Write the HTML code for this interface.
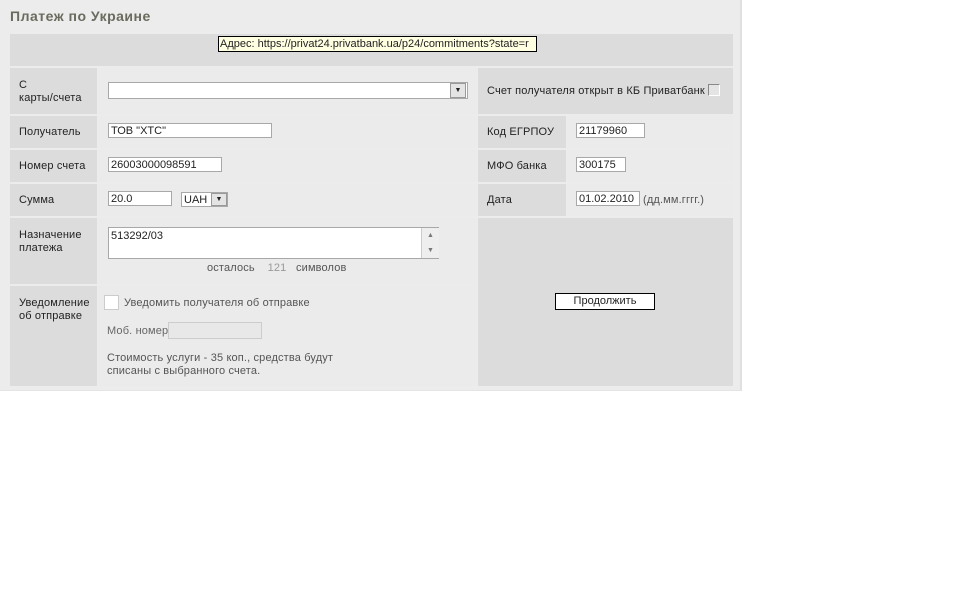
<!DOCTYPE html>
<html><head><meta charset="utf-8"><style>
body{margin:0;width:962px;height:615px;background:#fff;font-family:"Liberation Sans","DejaVu Sans",sans-serif;font-size:11px;color:#222;position:relative;overflow:hidden}
.a{position:absolute}
.wrap{left:0;top:0;width:740px;height:390px;background:#ececec;border-right:2px solid #e0e0e0;border-bottom:1px solid #e4e4e4}
.d{background:#dcdcdc}.l{background:#ebebeb}
.inp{position:absolute;background:#fff;border:1px solid #a8a8a8;height:15px;box-sizing:border-box;font-size:11px;padding:1px 2px;line-height:12px}
.t{position:absolute;white-space:nowrap;line-height:13px;letter-spacing:0.15px}
</style></head><body>
<div class="a wrap"></div>
<div class="t" style="left:10px;top:8px;font-size:14px;font-weight:bold;color:#6a6a5e;line-height:17px;letter-spacing:0.5px">Платеж по Украине</div>
<div class="a d" style="left:10px;top:34px;width:723px;height:32px"></div>
<div class="a d" style="left:10px;top:68px;width:87px;height:46px"></div>
<div class="a l" style="left:98px;top:68px;width:379px;height:46px"></div>
<div class="a d" style="left:478px;top:68px;width:255px;height:46px"></div>
<div class="a d" style="left:10px;top:116px;width:87px;height:32px"></div>
<div class="a l" style="left:98px;top:116px;width:379px;height:32px"></div>
<div class="a d" style="left:478px;top:116px;width:88px;height:32px"></div>
<div class="a l" style="left:567px;top:116px;width:166px;height:32px"></div>
<div class="a d" style="left:10px;top:150px;width:87px;height:32px"></div>
<div class="a l" style="left:98px;top:150px;width:379px;height:32px"></div>
<div class="a d" style="left:478px;top:150px;width:88px;height:32px"></div>
<div class="a l" style="left:567px;top:150px;width:166px;height:32px"></div>
<div class="a d" style="left:10px;top:184px;width:87px;height:32px"></div>
<div class="a l" style="left:98px;top:184px;width:379px;height:32px"></div>
<div class="a d" style="left:478px;top:184px;width:88px;height:32px"></div>
<div class="a l" style="left:567px;top:184px;width:166px;height:32px"></div>
<div class="a d" style="left:10px;top:218px;width:87px;height:66px"></div>
<div class="a l" style="left:98px;top:218px;width:379px;height:66px"></div>
<div class="a d" style="left:10px;top:286px;width:87px;height:100px"></div>
<div class="a l" style="left:98px;top:286px;width:379px;height:100px"></div>
<div class="a d" style="left:478px;top:218px;width:255px;height:168px"></div>

<div class="t" style="left:19px;top:79px">С<br>карты/счета</div>
<div class="inp" style="left:108px;top:82px;width:360px;height:17px"></div>
<div class="a" style="left:450px;top:83px;width:16px;height:15px;background:#e4e4e4;border:1px solid #999;box-sizing:border-box;font-size:7px;text-align:center;line-height:13px">▼</div>
<div class="t" style="left:487px;top:85px">Счет получателя открыт в КБ Приватбанк</div>
<div class="a" style="left:708px;top:84px;width:12px;height:12px;border:1px solid #999;border-color:#888 #fff #fff #888;box-sizing:border-box;background:#e4e4e4"></div>

<div class="t" style="left:19px;top:126px">Получатель</div>
<div class="inp" style="left:108px;top:123px;width:164px">ТОВ "ХТС"</div>
<div class="t" style="left:487px;top:126px">Код ЕГРПОУ</div>
<div class="inp" style="left:576px;top:123px;width:69px">21179960</div>

<div class="t" style="left:19px;top:160px">Номер счета</div>
<div class="inp" style="left:108px;top:157px;width:114px">26003000098591</div>
<div class="t" style="left:487px;top:160px">МФО банка</div>
<div class="inp" style="left:576px;top:157px;width:50px">300175</div>

<div class="t" style="left:19px;top:194px">Сумма</div>
<div class="inp" style="left:108px;top:191px;width:64px">20.0</div>
<div class="inp" style="left:181px;top:192px;width:47px;height:15px;padding-top:1px">UAH</div>
<div class="a" style="left:211px;top:193px;width:16px;height:13px;background:#e4e4e4;border:1px solid #999;box-sizing:border-box;font-size:7px;text-align:center;line-height:11px">▼</div>
<div class="t" style="left:487px;top:194px">Дата</div>
<div class="inp" style="left:576px;top:191px;width:64px">01.02.2010</div>
<div class="t" style="left:643px;top:194px;color:#555">(дд.мм.гггг.)</div>

<div class="t" style="left:19px;top:229px">Назначение<br>платежа</div>
<div class="inp" style="left:108px;top:227px;width:331px;height:32px;padding:2px 2px">513292/03</div>
<div class="a" style="left:421px;top:228px;width:17px;height:30px;background:#eee;border-left:1px solid #ccc"><div style="font-size:7px;color:#777;text-align:center;line-height:15px">▲<br>▼</div></div>
<div class="t" style="left:207px;top:262px;color:#555">осталось&nbsp;&nbsp;&nbsp; <span style="color:#999">121</span> &nbsp;&nbsp;символов</div>

<div class="t" style="left:19px;top:297px">Уведомление<br>об отправке</div>
<div class="a" style="left:104px;top:295px;width:15px;height:15px;background:#fff;border:1px solid #ccc;box-sizing:border-box"></div>
<div class="t" style="left:124px;top:297px;color:#555">Уведомить получателя об отправке</div>
<div class="t" style="left:107px;top:325px;color:#666">Моб. номер</div>
<div class="a" style="left:168px;top:322px;width:94px;height:17px;background:#e8e8e8;border:1px solid #ccc;box-sizing:border-box"></div>
<div class="t" style="left:107px;top:352px;color:#555">Стоимость услуги - 35 коп., средства будут<br>списаны с выбранного счета.</div>

<div class="a" style="left:555px;top:293px;width:100px;height:17px;background:#fff;border:1px solid #000;box-sizing:border-box;text-align:center;line-height:15px">Продолжить</div>

<div class="a" style="left:218px;top:36px;width:319px;height:16px;background:#ffffe1;border:1px solid #000;box-sizing:border-box;font-size:11px;line-height:14px;padding-left:1px;white-space:nowrap;overflow:hidden">Адрес: https://privat24.privatbank.ua/p24/commitments?state=r</div>
</body></html>
